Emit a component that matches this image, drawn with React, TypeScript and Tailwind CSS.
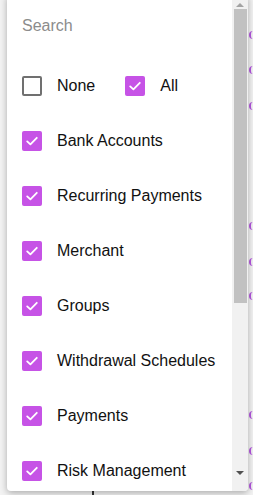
import React from 'react'

const ITEMS = [
  'Bank Accounts',
  'Recurring Payments',
  'Merchant',
  'Groups',
  'Withdrawal Schedules',
  'Payments',
  'Risk Management',
]

// purple marks of the page underneath, peeking out at the right edge
const BG_MARKS = [35, 70, 106, 226, 262, 296, 415, 451, 486]

function Box({ checked }: { checked: boolean }) {
  if (!checked) {
    return <div className="w-[20px] h-[20px] rounded-[2px] border-2 border-[#707070] bg-white flex-shrink-0" />
  }
  return (
    <div className="w-[20px] h-[20px] rounded-[2px] bg-[#c653e6] flex items-center justify-center flex-shrink-0">
      <svg width="14" height="14" viewBox="0 0 14 14" fill="none">
        <polyline points="2.2,7.4 5.4,10.4 11.8,3.8" stroke="#fff" strokeWidth="1.8" strokeLinecap="round" strokeLinejoin="round" />
      </svg>
    </div>
  )
}

export default function App() {
  return (
    <div className="relative w-[253px] h-[495px] overflow-hidden bg-[#f3f3f3]" style={{ fontFamily: '"Liberation Sans", Arial, sans-serif' }}>
      {BG_MARKS.map((y) => (
        <span key={y} className="absolute left-[249px] w-[6px] h-[8px] rounded-l-full border-l-2 border-[#b455e0]" style={{ top: y - 4 }} />
      ))}
      <div className="absolute left-[92px] top-[490px] w-[2px] h-[6px] bg-[#333]" />

      {/* Dropdown panel */}
      <div className="absolute left-[7px] top-[-5px] w-[241px] h-[496px] bg-white rounded-b-[4px] shadow-[0_2px_7px_rgba(0,0,0,0.3)] flex overflow-hidden">
        <div className="flex-1 pl-[15px]">
          <div className="h-[63px] pt-[21px] text-[16px] leading-[20px] text-[#8c8c8c]">Search</div>
          <div className="h-[55px] flex items-center">
            <Box checked={false} />
            <span className="ml-[15px] text-[16px] text-[#111]">None</span>
            <div className="ml-[30px] flex items-center">
              <Box checked />
              <span className="ml-[15px] text-[16px] text-[#111]">All</span>
            </div>
          </div>
          {ITEMS.map((it) => (
            <div key={it} className="h-[55px] flex items-center">
              <Box checked />
              <span className="ml-[15px] text-[16px] text-[#111] whitespace-nowrap">{it}</span>
            </div>
          ))}
        </div>

        {/* Scrollbar */}
        <div className="w-[16px] bg-[#f1f1f1] flex flex-col items-center">
          <div className="h-[14px] flex items-end justify-center pb-[2px]">
            <div className="w-0 h-0 border-l-[4px] border-r-[4px] border-b-[4px] border-l-transparent border-r-transparent border-b-[#a3a3a3]" />
          </div>
          <div className="w-[13px] h-[294px] bg-[#c1c1c1]" />
          <div className="flex-1" />
          <div className="h-[22px] flex items-start justify-center pt-[2px]">
            <div className="w-0 h-0 border-l-[4px] border-r-[4px] border-t-[4px] border-l-transparent border-r-transparent border-t-[#505050]" />
          </div>
        </div>
      </div>
    </div>
  )
}
